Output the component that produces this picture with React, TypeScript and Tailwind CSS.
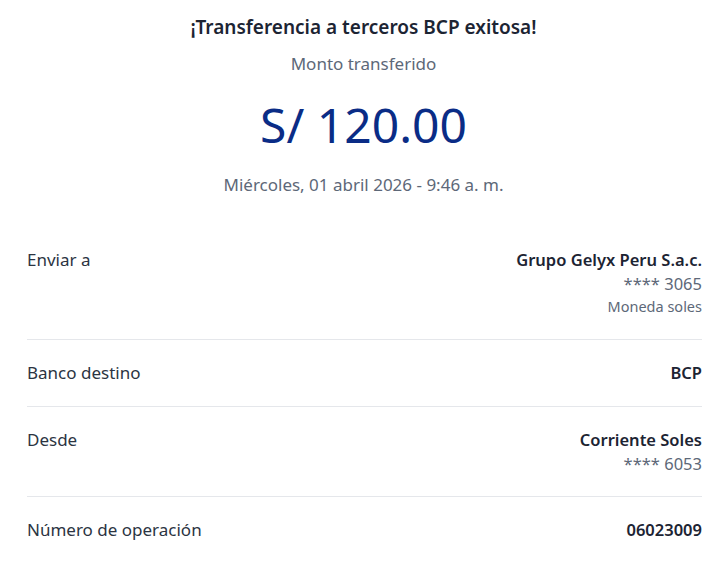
import React from "react";

const Row = ({ label, children, last }: { label: string; children: React.ReactNode; last?: boolean }) => (
  <div className={`flex justify-between items-start pt-[21px] pb-[21px] ${last ? "" : "border-b border-[#e5e7eb]"}`}>
    <div className="text-[17px] leading-[24px] text-[#2b3442]">{label}</div>
    <div className="flex flex-col items-end">{children}</div>
  </div>
);

export default function App() {
  return (
    <div className="w-[727px] h-[562px] bg-white overflow-hidden" style={{ fontFamily: '"Noto Sans", sans-serif' }}>
      <div className="flex flex-col items-center pt-[14px]">
        <div className="text-[19px] leading-[26px] font-semibold text-[#1c2433]">¡Transferencia a terceros BCP exitosa!</div>
        <div className="mt-[12px] text-[17px] leading-[24px] text-[#5d6878]">Monto transferido</div>
        <div className="mt-[21px] text-[48px] leading-[56px] text-[#0a2c86]">S/ 120.00</div>
        <div className="mt-[20px] text-[17px] leading-[24px] text-[#5d6878]">Miércoles, 01 abril 2026 - 9:46 a. m.</div>
      </div>
      <div className="ml-[27px] mr-[25px] mt-[30px]">
        <Row label="Enviar a">
          <div className="text-[16.5px] leading-[24px] font-semibold text-[#1c2433]">Grupo Gelyx Peru S.a.c.</div>
          <div className="text-[16.5px] leading-[23px] text-[#5d6878]">**** 3065</div>
          <div className="text-[14.5px] leading-[23px] text-[#5d6878]">Moneda soles</div>
        </Row>
        <Row label="Banco destino">
          <div className="text-[16.5px] leading-[24px] font-semibold text-[#1c2433]">BCP</div>
        </Row>
        <Row label="Desde">
          <div className="text-[16.5px] leading-[24px] font-semibold text-[#1c2433]">Corriente Soles</div>
          <div className="text-[16.5px] leading-[23px] text-[#5d6878]">**** 6053</div>
        </Row>
        <Row label="Número de operación" last>
          <div className="text-[16.5px] leading-[24px] font-semibold text-[#1c2433]">06023009</div>
        </Row>
      </div>
    </div>
  );
}
